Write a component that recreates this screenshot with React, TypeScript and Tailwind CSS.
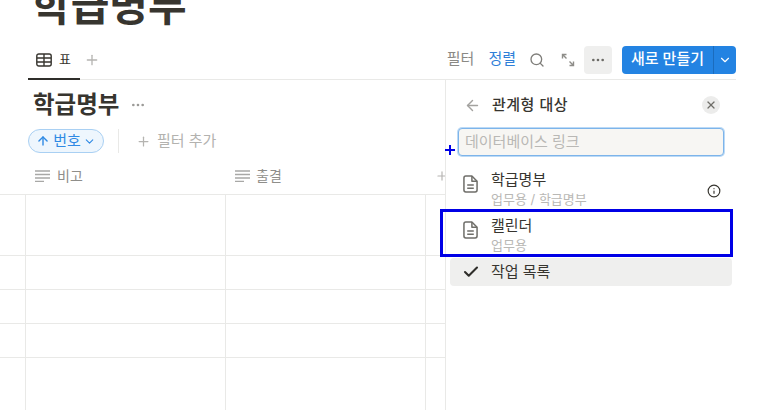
import { ArrowLeft, ArrowUp, Check, ChevronDown, Info, MoreHorizontal, Plus, Search, X } from "lucide-react";

const FONT = "font-['Inter','Noto_Sans_CJK_KR',sans-serif]";

function TableIcon() {
  return (
    <svg width="16" height="14" viewBox="0 0 16 14" fill="none" stroke="#37352f" strokeWidth="1.4">
      <rect x="0.8" y="1" width="14.4" height="12" rx="2" />
      <path d="M1 5h14M1 9h14M8 1v12" />
    </svg>
  );
}

function TextIcon() {
  return (
    <svg width="15" height="12" viewBox="0 0 15 12" fill="none" stroke="#a8a8a6" strokeWidth="1.3">
      <path d="M0 1h15M0 4.500h15M0 8h15M0 11.500h9" />
    </svg>
  );
}

function PageIcon() {
  return (
    <svg width="15" height="18" viewBox="0 0 16 19" fill="none" stroke="#6f6e69" strokeWidth="1.6" strokeLinejoin="round">
      <path d="M3 1h6.500L15 6.500V16a2 2 0 0 1-2 2H3a2 2 0 0 1-2-2V3a2 2 0 0 1 2-2z" />
      <path d="M9.500 1v5.500H15M4.500 10.500h7M4.500 14h7" />
    </svg>
  );
}

function ExpandIcon() {
  return (
    <svg width="14" height="14" viewBox="0 0 14 14" fill="none" stroke="#8e8d89" strokeWidth="1.4">
      <path d="M1.500 1.500l4 4M1.500 5.500v-4h4M12.500 12.500l-4-4M12.500 8.500v4h-4" />
    </svg>
  );
}

function ResultRow({ title, path, info }: { title: string; path: string; info?: boolean }) {
  return (
    <div className="flex h-[46px] items-start pl-[17px] pr-[16px]">
      <div className="mt-[5px] w-[28px] shrink-0">
        <PageIcon />
      </div>
      <div className="min-w-0 flex-1">
        <div className="text-[15px] leading-[20px] text-[#37352f]">{title}</div>
        <div className="mt-[1px] text-[13px] leading-[16px] text-[#b9b8b5]">{path}</div>
      </div>
      {info && <Info size={14} className="mt-[14px] text-[#37352f]" />}
    </div>
  );
}

export default function App() {
  const rows = [61, 34, 34, 34, 53];

  return (
    <div className={`relative h-[410px] w-[780px] overflow-hidden bg-white ${FONT}`}>
      <div className="h-[45px] overflow-hidden pl-[32px]">
        <h1 className="mt-[-19px] text-[42px] leading-[50px] font-bold text-[#37352f]">학급명부</h1>
      </div>

      <div className="ml-[28px] mr-[44px] flex h-[35px] items-center justify-between border-b border-[#e9e9e7]">
        <div className="flex h-full items-center">
          <div className="relative flex h-full w-[52px] items-center pb-[4px] pl-[8px]">
            <TableIcon />
            <span className="ml-[7px] text-[13px] text-[#37352f]">표</span>
            <div className="absolute right-0 bottom-[-1px] left-0 h-[2px] bg-[#2f2e2a]" />
          </div>
          <Plus size={16} className="mb-[4px] ml-[4px] text-[#b5b4b1]" />
        </div>
        <div className="mb-[5px] flex items-center">
          <span className="text-[15px] text-[#8a8985]">필터</span>
          <span className="ml-[14px] text-[15px] text-[#2f7fd8]">정렬</span>
          <Search size={16} className="ml-[13px] text-[#7f7e7a]" />
          <div className="ml-[16px]">
            <ExpandIcon />
          </div>
          <div className="ml-[9px] flex h-[28px] w-[28px] items-center justify-center rounded-[4px] bg-[#efefee]">
            <MoreHorizontal size={16} className="text-[#6b6a66]" />
          </div>
          <div className="ml-[10px] flex h-[28px] w-[114px] items-center rounded-[4px] bg-[#2383e2] text-white">
            <span className="w-[91px] text-center text-[15px] font-medium">새로 만들기</span>
            <div className="flex h-full flex-1 items-center justify-center border-l border-[#1b6cbd]">
              <ChevronDown size={14} />
            </div>
          </div>
        </div>
      </div>

      <div className="flex h-[330px]">
        <div className="w-[445px] shrink-0">
          <div className="flex h-[49px] items-center pl-[33px]">
            <span className="text-[23.500px] leading-[26px] font-bold text-[#37352f]">학급명부</span>
            <MoreHorizontal size={16} className="ml-[11px] mt-[1px] text-[#9b9a97]" />
          </div>
          <div className="flex h-[24px] items-center pl-[28px]">
            <div className="flex h-[24px] w-[76px] items-center justify-center rounded-full border border-[#a9d0f3] bg-[#eef6fd] text-[#2f8ae4]">
              <ArrowUp size={14} strokeWidth={2.4} />
              <span className="ml-[3px] text-[15px]">번호</span>
              <ChevronDown size={13} className="ml-[2px]" />
            </div>
            <div className="ml-[14px] h-[24px] w-px bg-[#e9e9e7]" />
            <Plus size={15} className="ml-[17px] text-[#b5b4b1]" />
            <span className="ml-[6px] text-[15px] text-[#b3b2af]">필터 추가</span>
          </div>

          <div className="mt-[6px] flex h-[36px] items-center overflow-hidden border-b border-[#e9e9e7] pb-[2px]">
            <div className="flex w-[235px] shrink-0 items-center pl-[35px]">
              <TextIcon />
              <span className="ml-[7px] text-[14px] text-[#8f8e8a]">비고</span>
            </div>
            <div className="flex w-[190px] shrink-0 items-center">
              <TextIcon />
              <span className="ml-[6px] text-[14px] text-[#8f8e8a]">출결</span>
            </div>
            <Plus size={14} className="ml-[10px] shrink-0 text-[#b5b4b1]" />
          </div>

          {rows.map((h, i) => (
            <div
              key={i}
              className={`grid grid-cols-[26px_200px_200px_19px] ${i < rows.length - 1 ? "border-b border-[#e9e9e7]" : ""}`}
              style={{ height: h }}
            >
              <div className="border-r border-[#e9e9e7]" />
              <div className="border-r border-[#e9e9e7]" />
              <div className="border-r border-[#e9e9e7]" />
              <div />
            </div>
          ))}
        </div>

        <div className="w-[292px] border-l border-[#e9e9e7]">
          <div className="flex h-[50px] items-center pl-[18px] pr-[17px]">
            <ArrowLeft size={17} className="text-[#a3a29f]" />
            <span className="ml-[11px] flex-1 text-[15px] font-medium tracking-[0.5px] text-[#37352f]">관계형 대상</span>
            <div className="flex h-[18px] w-[18px] items-center justify-center rounded-full bg-[#ececeb]">
              <X size={12} strokeWidth={2.5} className="text-[#6f6e69]" />
            </div>
          </div>
          <div className="mx-[12px] mt-[-2px] flex h-[28px] w-[266px] items-center rounded-[4px] border border-[#7db4ea] bg-[#f7f6f3] pl-[6px] shadow-[0_0_0_1px_#bcdaf6]">
            <span className="text-[15px] text-[#b9b8b5]">데이터베이스 링크</span>
          </div>
          <div className="mt-[14px]">
            <ResultRow title="학급명부" path="업무용 / 학급명부" info />
            <ResultRow title="캘린더" path="업무용" />
          </div>
          <div className="ml-[4px] mt-[-4px] flex h-[28px] w-[282px] items-center rounded-[4px] bg-[#efefee] pl-[12px]">
            <Check size={18} strokeWidth={2.8} className="text-[#2f2e2a]" />
            <span className="ml-[11px] text-[15px] text-[#37352f]">작업 목록</span>
          </div>
        </div>
      </div>

      <div className="absolute top-[209px] left-[440px] h-[48px] w-[293px] border-[3px] border-[#0000e6]" />
      <div className="absolute top-[149px] left-[445px] h-[2px] w-[10px] bg-[#0000e6]" />
      <div className="absolute top-[145px] left-[449px] h-[10px] w-[2px] bg-[#0000e6]" />
    </div>
  );
}
